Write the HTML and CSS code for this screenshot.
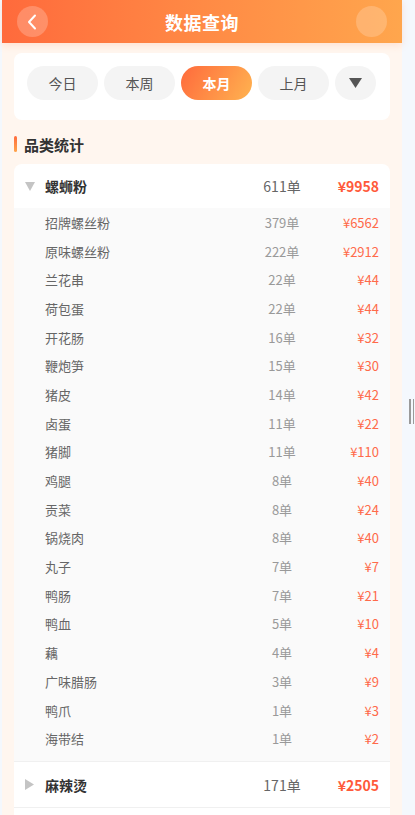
FILE: index.html
```html
<!DOCTYPE html>
<html lang="zh-CN">
<head>
    <meta charset="UTF-8">
    <meta name="viewport" content="width=device-width, initial-scale=1.0">
    <title>数据查询</title>
    <link rel="stylesheet" href="styles.css">
</head>
<body>
    <div class="app">
        <div class="header">
            <div class="circle-btn">
                <svg width="10" height="16" viewBox="0 0 10 16"><path d="M8 1.5 L2 8 L8 14.5" fill="none" stroke="#fff" stroke-width="2" stroke-linecap="round" stroke-linejoin="round"/></svg>
            </div>
            <div class="title">数据查询</div>
            <div class="circle-btn light"></div>
        </div>

        <div class="tabs-card">
            <div class="tab">今日</div>
            <div class="tab">本周</div>
            <div class="tab active">本月</div>
            <div class="tab">上月</div>
            <div class="tab more">
                <svg width="13" height="10" viewBox="0 0 13 10"><path d="M0 0 H13 L6.5 10 Z" fill="#555"/></svg>
            </div>
        </div>

        <div class="section-title"><span class="bar"></span>品类统计</div>

        <div class="list-card">
            <div class="group-row open">
                <span class="arrow">
                    <svg width="10" height="9" viewBox="0 0 10 9"><path d="M0 0 H10 L5 9 Z" fill="#c4c4c4"/></svg>
                </span>
                <span class="name">螺蛳粉</span>
                <span class="count">611单</span>
                <span class="price">¥9958</span>
            </div>
            <div class="items">
                <div class="item"><span class="name">招牌螺丝粉</span><span class="count">379单</span><span class="price">¥6562</span></div>
                <div class="item"><span class="name">原味螺丝粉</span><span class="count">222单</span><span class="price">¥2912</span></div>
                <div class="item"><span class="name">兰花串</span><span class="count">22单</span><span class="price">¥44</span></div>
                <div class="item"><span class="name">荷包蛋</span><span class="count">22单</span><span class="price">¥44</span></div>
                <div class="item"><span class="name">开花肠</span><span class="count">16单</span><span class="price">¥32</span></div>
                <div class="item"><span class="name">鞭炮笋</span><span class="count">15单</span><span class="price">¥30</span></div>
                <div class="item"><span class="name">猪皮</span><span class="count">14单</span><span class="price">¥42</span></div>
                <div class="item"><span class="name">卤蛋</span><span class="count">11单</span><span class="price">¥22</span></div>
                <div class="item"><span class="name">猪脚</span><span class="count">11单</span><span class="price">¥110</span></div>
                <div class="item"><span class="name">鸡腿</span><span class="count">8单</span><span class="price">¥40</span></div>
                <div class="item"><span class="name">贡菜</span><span class="count">8单</span><span class="price">¥24</span></div>
                <div class="item"><span class="name">锅烧肉</span><span class="count">8单</span><span class="price">¥40</span></div>
                <div class="item"><span class="name">丸子</span><span class="count">7单</span><span class="price">¥7</span></div>
                <div class="item"><span class="name">鸭肠</span><span class="count">7单</span><span class="price">¥21</span></div>
                <div class="item"><span class="name">鸭血</span><span class="count">5单</span><span class="price">¥10</span></div>
                <div class="item"><span class="name">藕</span><span class="count">4单</span><span class="price">¥4</span></div>
                <div class="item"><span class="name">广味腊肠</span><span class="count">3单</span><span class="price">¥9</span></div>
                <div class="item"><span class="name">鸭爪</span><span class="count">1单</span><span class="price">¥3</span></div>
                <div class="item"><span class="name">海带结</span><span class="count">1单</span><span class="price">¥2</span></div>
            </div>
            <div class="group-row">
                <span class="arrow">
                    <svg width="10" height="11" viewBox="0 0 10 11"><path d="M0 0 V11 L9 5.5 Z" fill="#c4c4c4"/></svg>
                </span>
                <span class="name">麻辣烫</span>
                <span class="count">171单</span>
                <span class="price">¥2505</span>
            </div>
        </div>
    </div>
    <div class="handle"><span></span><span></span></div>
</body>
</html>
```

FILE: styles.css
```css
html, body {
    margin: 0;
    height: 815px;
    overflow: hidden;
}
body {
    background: #f4f8fd;
    font-family: "Noto Sans CJK SC", "Noto Sans", sans-serif;
    position: relative;
}
.app {
    margin-left: 2px;
    width: 400px;
    min-height: 815px;
    background: #fff6ef;
}
.header {
    height: 43px;
    display: flex;
    align-items: center;
    justify-content: space-between;
    padding: 0 15px;
    background: linear-gradient(90deg, #ff6a3c 0%, #ff8a45 50%, #ffa64d 100%);
    box-shadow: 0 2px 8px rgba(255, 120, 60, 0.18);
    position: relative;
}
.circle-btn {
    width: 31px;
    height: 31px;
    border-radius: 50%;
    background: rgba(255, 255, 255, 0.22);
    display: flex;
    align-items: center;
    justify-content: center;
}
.circle-btn svg {
    margin-left: -2px;
}
.circle-btn.light {
    background: rgba(255, 255, 255, 0.2);
}
.title {
    color: #fff;
    font-size: 18px;
    font-weight: bold;
    letter-spacing: 0.5px;
}
.tabs-card {
    margin: 10px 12px 0;
    background: #fff;
    border-radius: 8px;
    padding: 13px 13px 20px;
    display: flex;
    gap: 6px;
}
.tab {
    width: 71px;
    height: 34px;
    border-radius: 17px;
    background: #f4f4f4;
    color: #555;
    font-size: 14px;
    display: flex;
    align-items: center;
    justify-content: center;
}
.tab.active {
    background: linear-gradient(120deg, #ff6a3c 0%, #ffb350 100%);
    color: #fff;
    font-weight: bold;
}
.tab.more {
    width: 41px;
}
.section-title {
    margin: 14px 12px 10px;
    display: flex;
    align-items: center;
    gap: 7px;
    height: 20px;
    font-size: 15px;
    font-weight: bold;
    color: #333;
}
.bar {
    width: 3px;
    height: 16px;
    border-radius: 2px;
    background: linear-gradient(180deg, #ff6a3c, #ffa64d);
}
.list-card {
    margin: 0 12px;
    background: #fff;
    border-radius: 8px;
    overflow: hidden;
    padding-bottom: 20px;
}
.group-row, .item {
    display: flex;
    align-items: center;
    padding: 0 11px;
}
.group-row {
    height: 45px;
    border-bottom: 1px solid #f0f0f0;
}
.group-row.open {
    height: 44px;
    border-bottom: none;
}
.group-row .arrow {
    width: 10px;
    margin-right: 10px;
    display: flex;
}
.group-row .name {
    flex: 1;
    font-size: 14px;
    font-weight: bold;
    color: #333;
}
.count {
    width: 70px;
    text-align: center;
    font-size: 14px;
    color: #666;
}
.price {
    width: 62px;
    text-align: right;
    font-size: 14px;
    font-weight: bold;
    color: #ff5a3a;
}
.items {
    background: #fafafa;
    padding-bottom: 8px;
    border-bottom: 1px solid #f0f0f0;
}
.item {
    height: 28.7px;
    padding-left: 31px;
}
.item .name {
    flex: 1;
    font-size: 13px;
    color: #666;
}
.item .count {
    font-size: 13px;
    color: #999;
}
.item .price {
    font-size: 13px;
    font-weight: normal;
    color: #ff6a4a;
}
.handle {
    position: absolute;
    left: 409px;
    top: 399px;
    display: flex;
    gap: 2px;
}
.handle span {
    width: 1.5px;
    height: 25px;
    background: #9a9a9a;
}
```
